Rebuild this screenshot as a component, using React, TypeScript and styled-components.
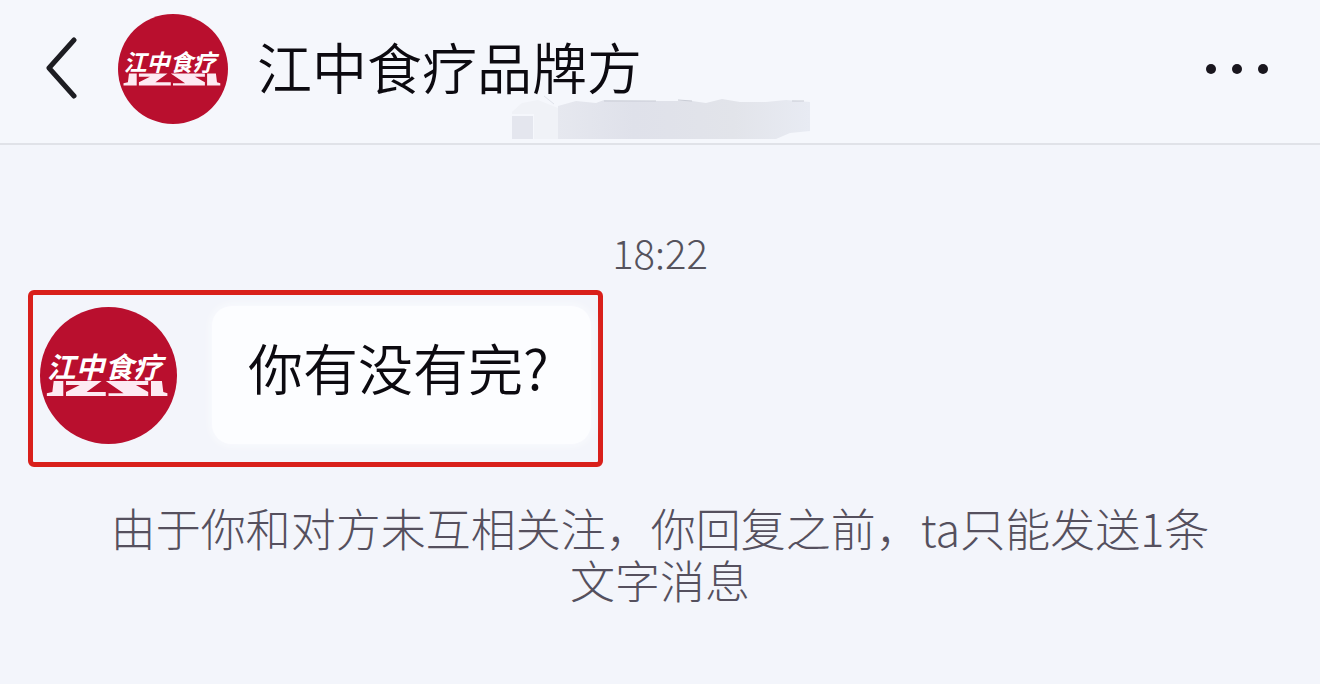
import React from "react";
import styled, { createGlobalStyle } from "styled-components";

const GlobalStyle = createGlobalStyle`
  * { box-sizing: border-box; }
  body {
    margin: 0;
    background: #f3f5fb;
    color: #0c0a10;
    font-family: "Noto Sans CJK SC", sans-serif;
    font-weight: 300;
  }
`;

const Page = styled.div`
  min-height: 100vh;
  display: flex;
  flex-direction: column;
`;

const Header = styled.header`
  position: relative;
  display: flex;
  align-items: center;
  height: 145px;
  padding: 0 50px 6px 44px;
  border-bottom: 2px solid #e0e2e8;
  background: #f5f7fc;
`;

const IconButton = styled.button`
  display: flex;
  padding: 0;
  border: 0;
  background: none;
  cursor: pointer;
`;

const Title = styled.h1`
  flex: 1;
  margin: 0 0 8px 29px;
  font-size: 55px;
  line-height: 64px;
  font-weight: 350;
`;

const Smudge = styled.svg`
  position: absolute;
  left: 510px;
  top: 94px;
`;

const Conversation = styled.main`
  flex: 1;
  display: flex;
  flex-direction: column;
  padding: 83px 28px 40px;
`;

const Time = styled.time`
  align-self: center;
  font-size: 40px;
  line-height: 48px;
  color: #55525c;
`;

const Highlight = styled.article`
  align-self: flex-start;
  display: flex;
  align-items: center;
  gap: 35px;
  margin-top: 14px;
  padding: 11px 7px 18px;
  border: 5px solid #d9201b;
  border-radius: 6px;
`;

const Bubble = styled.p`
  margin: 0;
  padding: 28px 42px 46px 36px;
  border-radius: 20px;
  background: #fcfdff;
  box-shadow: 0 0 10px #fcfdff;
  font-size: 55px;
  line-height: 64px;
  font-weight: 350;
`;

const Notice = styled.p`
  margin: 35px 72px 0;
  text-align: center;
  font-size: 45px;
  line-height: 52px;
  color: #55505e;
`;

const Avatar = ({ size }: { size: number }) => (
  <svg width={size} height={size} viewBox="0 0 100 100" role="img" aria-label="江中食疗">
    <circle cx="50" cy="50" r="50" fill="#b90f2e" />
    <text x="5" y="52" fill="#fff" fontSize="21" fontWeight="700" fontStyle="italic">江中食疗</text>
    <g fill="#fdeaf2">
      <path d="M10 54H17V65H5V63L9 62Z" />
      <path d="M19 54H45L34 62H48V65H19V62L29 57H19Z" />
      <path d="M48 54H79V57H70L79 62V65H50V63H61Z" />
      <path d="M81 54H89L90 62L93 63V65H81Z" />
    </g>
  </svg>
);

export default function App() {
  return (
    <Page>
      <GlobalStyle />
      <Header>
        <IconButton aria-label="返回">
          <svg width="74" height="64" viewBox="0 0 74 64" fill="none" stroke="#1d1d22" strokeWidth="5" strokeLinecap="round" strokeLinejoin="round">
            <path d="M30 3L5 31L30 59" />
          </svg>
        </IconButton>
        <Avatar size={110} />
        <Title>江中食疗品牌方</Title>
        <IconButton aria-label="更多">
          <svg width="66" height="20" viewBox="0 0 66 20" fill="#19161e">
            <circle cx="7" cy="10" r="5" />
            <circle cx="33" cy="10" r="5" />
            <circle cx="59" cy="10" r="5" />
          </svg>
        </IconButton>
        <Smudge width="304" height="48" viewBox="0 0 304 48" aria-hidden="true">
          <defs>
            <linearGradient id="smudge">
              <stop offset="0" stopColor="#e6e8ef" />
              <stop offset="0.3" stopColor="#dfe1ea" />
              <stop offset="0.7" stopColor="#e2e4ea" />
              <stop offset="1" stopColor="#e8ebf3" />
            </linearGradient>
          </defs>
          <path d="M2 18L12 9L28 6L48 14V45H24V20H2Z" fill="#f0f2f7" />
          <path d="M2 22H23V45H2Z" fill="#e4e6ee" />
          <path d="M48 12L66 7L86 9L94 6L140 7L182 7L196 9L212 5L230 8L256 8L276 6L300 8V37L280 39L266 45H48Z" fill="url(#smudge)" />
          <path d="M94 7H146M168 6L182 7M282 7H294" stroke="#c9ccd5" fill="none" />
          <path d="M34 2L44 10" stroke="#dfe2ea" fill="none" />
        </Smudge>
      </Header>
      <Conversation>
        <Time dateTime="18:22">18:22</Time>
        <Highlight>
          <Avatar size={137} />
          <Bubble>你有没有完?</Bubble>
        </Highlight>
        <Notice>由于你和对方未互相关注，你回复之前，ta只能发送1条文字消息</Notice>
      </Conversation>
    </Page>
  );
}
